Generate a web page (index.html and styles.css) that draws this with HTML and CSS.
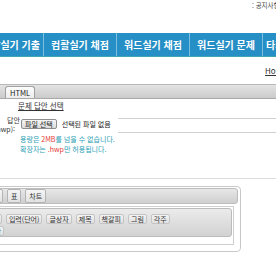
FILE: index.html
```html
<!DOCTYPE html>
<html lang="ko">
<head>
    <meta charset="UTF-8">
    <meta name="viewport" content="width=device-width, initial-scale=1.0">
    <title>답안 제출</title>
    <link rel="stylesheet" href="styles.css">
</head>
<body>
<div class="page">
    <div class="top">
        <span class="notice">: 공지사항</span>
    </div>

    <nav class="menu">
        <a href="#" class="first">컴활실기 기출</a>
        <a href="#">컴활실기 채점</a>
        <a href="#">워드실기 채점</a>
        <a href="#">워드실기 문제</a>
        <a href="#" class="last">타자연습</a>
    </nav>

    <div class="crumb"><a href="#">Home</a></div>

    <div class="tabbar">
        <span class="tab">HTML</span>
    </div>

    <!-- 답안 업로드 -->
    <div class="form">
        <div class="row row-link">
            <div class="label"></div>
            <a href="#" class="pick">문제 답안 선택</a>
        </div>
        <div class="row row-file">
            <div class="label">
                <span>답안</span>
                <span class="sub">파일(hwp):</span>
            </div>
            <button type="button" class="file-btn">파일 선택</button>
            <span class="file-name">선택된 파일 없음</span>
            <div class="file-box"></div>
        </div>
        <div class="row">
            <div class="label"></div>
            <div class="notes">
                <p>용량은 <span class="hl">2MB</span>를 넘을 수 없습니다.</p>
                <p>확장자는 <span class="hl">.hwp</span>만 허용됩니다.</p>
            </div>
        </div>
    </div>

    <!-- 편집기 -->
    <div class="editor">
        <div class="ed-tabs">
            <span class="ed-tab">본문</span>
            <span class="ed-tab">표</span>
            <span class="ed-tab">차트</span>
        </div>
        <div class="ed-panel">
            <div class="toolbar">
                <div class="tb-row first-row">
                    <span class="tb-btn">인용</span>
                    <span class="tb-btn">입력(단어)</span>
                    <span class="tb-btn">글상자</span>
                    <span class="tb-btn">제목</span>
                    <span class="tb-btn">책갈피</span>
                    <span class="tb-btn">그림</span>
                    <span class="tb-btn">각주</span>
                </div>
                <div class="tb-row second-row">
                    <span class="tb-btn">문단</span>
                </div>
            </div>
        </div>
    </div>
</div>
</body>
</html>
```

FILE: styles.css
```css
html {
    background: #fff;
}
body {
    margin: 0;
    overflow: hidden;
    font-family: "Noto Sans CJK KR", "Noto Sans", sans-serif;
    color: #333;
}
.page {
    width: 340px;
    margin-left: -29px;
}
.top {
    height: 33px;
    padding-left: 281px;
    font-size: 6.5px;
    line-height: 10px;
    white-space: nowrap;
    color: #444;
}

/* 상단 메뉴 */
.menu {
    display: flex;
    height: 23px;
    background: #268fc6;
    border-bottom: 1px solid #3ea6b0;
    overflow: hidden;
}
.menu a {
    flex: none;
    width: 72px;
    border-right: 1px solid #7cbfe2;
    color: #fff;
    font-size: 10px;
    font-weight: bold;
    line-height: 23px;
    text-align: center;
    text-decoration: none;
    white-space: nowrap;
    overflow: hidden;
}
.menu a.first {
    text-align: right;
    padding-right: 3px;
    width: 69px;
}
.menu a.last {
    text-align: left;
    padding-left: 3px;
    width: 69px;
}
.crumb {
    height: 27px;
    padding-left: 294px;
    font-size: 8px;
    line-height: 27px;
    white-space: nowrap;
}
.crumb a {
    color: #333;
}

/* 탭 */
.tabbar {
    display: flex;
    align-items: flex-end;
    height: 13px;
    padding-left: 34px;
    border-top: 1px solid #b8b8b8;
    border-bottom: 1px solid #a9a9a9;
    background: linear-gradient(#e3e3e3, #cbcbcb);
}
.tab {
    height: 12px;
    box-sizing: border-box;
    padding: 0 4px;
    border: 1px solid #a0a0a0;
    border-bottom: 0;
    border-radius: 3px 3px 0 0;
    background: linear-gradient(#fdfdfd, #ececec);
    font-size: 7.5px;
    line-height: 11px;
    color: #222;
}

/* 업로드 폼 */
.form {
    height: 79px;
    border-bottom: 1px solid #dcdcdc;
}
.row {
    display: flex;
    align-items: flex-start;
}
.label {
    flex: none;
    width: 50px;
    font-size: 7px;
    line-height: 9px;
    text-align: right;
    white-space: nowrap;
}
.label span {
    display: block;
    padding-right: 1px;
}
.label .sub {
    padding-right: 6px;
}
.row-link {
    padding-top: 2px;
}
.pick {
    margin-left: -3px;
    font-size: 7.5px;
    line-height: 10px;
    color: #333;
}
.row-file {
    margin-top: 7px;
    height: 15px;
}
.row-file .label {
    margin-top: -2px;
}
.file-btn {
    margin: 1px 0 0;
    height: 10px;
    box-sizing: border-box;
    padding: 0 3px;
    border: 1px solid #8e8e8e;
    border-radius: 2px;
    background: linear-gradient(#f6f6f6, #dadada);
    font-family: inherit;
    font-size: 7px;
    line-height: 8px;
    color: #222;
}
.file-name {
    margin-left: 5px;
    font-size: 7px;
    line-height: 13px;
    white-space: nowrap;
    color: #222;
}
.file-box {
    flex: 1;
    margin-left: 7px;
    height: 15px;
    box-sizing: border-box;
    border-top: 1px solid #d0d0d0;
    border-bottom: 1px solid #d0d0d0;
}
.notes {
    margin-left: -1px;
    padding-top: 1px;
    font-size: 7px;
    line-height: 10px;
    color: #2ba0b4;
    white-space: nowrap;
}
.notes p {
    margin: 0;
}
.hl {
    color: #e53935;
}

/* 편집기 */
.editor {
    width: 270px;
    box-sizing: border-box;
    margin-top: 7px;
    padding: 1px 2px 6px;
    border: 1px solid #c9c9c9;
    border-radius: 4px;
}
.ed-tabs {
    display: flex;
    gap: 4px;
    height: 16px;
    box-sizing: border-box;
    padding-left: 7px;
    border: 1px solid #bdbdbd;
    border-radius: 3px;
    background: linear-gradient(#e7e7e7, #cfcfcf);
}
.ed-tab {
    height: 14px;
    box-sizing: border-box;
    padding: 0 3px;
    border: 1px solid #b4b4b4;
    border-radius: 2px;
    background: linear-gradient(#f5f5f5, #e2e2e2);
    font-size: 7px;
    line-height: 12px;
}
.ed-panel {
    margin: 2px 4px 0 0;
    padding: 1px 1px 7px;
    border: 1px solid #cfcfcf;
    background: #fff;
}
.toolbar {
    height: 29px;
    box-sizing: border-box;
    padding-top: 5px;
    border: 1px solid #bcbcbc;
    border-radius: 3px;
    background: linear-gradient(#ebebeb, #d2d2d2);
    overflow: hidden;
}
.tb-row {
    display: flex;
    gap: 4px;
}
.first-row {
    padding-left: 6px;
}
.second-row {
    margin-top: 2px;
    padding-left: 8px;
}
.tb-btn {
    flex: none;
    height: 10px;
    box-sizing: border-box;
    padding: 0 2px;
    border: 1px solid #c4c4c4;
    border-radius: 2px;
    background: linear-gradient(#f3f3f3, #e0e0e0);
    font-size: 7px;
    line-height: 8px;
    white-space: nowrap;
}
```
